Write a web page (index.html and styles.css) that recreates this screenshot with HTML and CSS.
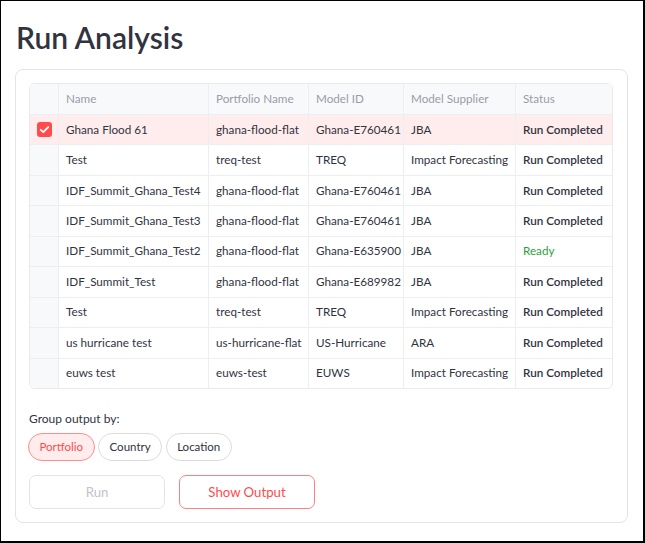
FILE: index.html
```html
<!DOCTYPE html>
<html>
<head>
<meta charset="utf-8">
<link rel="stylesheet" href="styles.css">
</head>
<body>
<div class="frame">
  <h1 class="title">Run Analysis</h1>
  <div class="card">
    <div class="grid">
      <div class="row head">
        <div class="cell sel"></div>
        <div class="cell">Name</div>
        <div class="cell">Portfolio Name</div>
        <div class="cell">Model ID</div>
        <div class="cell">Model Supplier</div>
        <div class="cell">Status</div>
      </div>
      <div class="row selected">
        <div class="cell sel"><span class="check"><svg viewBox="0 0 16 16" width="15" height="15"><path d="M4 8.3l2.7 2.6L12 5.4" fill="none" stroke="#fff" stroke-width="1.9" stroke-linecap="round" stroke-linejoin="round"/></svg></span></div>
        <div class="cell">Ghana Flood 61</div>
        <div class="cell">ghana-flood-flat</div>
        <div class="cell">Ghana-E760461</div>
        <div class="cell">JBA</div>
        <div class="cell status">Run Completed</div>
      </div>
      <div class="row">
        <div class="cell sel"></div>
        <div class="cell">Test</div>
        <div class="cell">treq-test</div>
        <div class="cell">TREQ</div>
        <div class="cell">Impact Forecasting</div>
        <div class="cell status">Run Completed</div>
      </div>
      <div class="row">
        <div class="cell sel"></div>
        <div class="cell">IDF_Summit_Ghana_Test4</div>
        <div class="cell">ghana-flood-flat</div>
        <div class="cell">Ghana-E760461</div>
        <div class="cell">JBA</div>
        <div class="cell status">Run Completed</div>
      </div>
      <div class="row">
        <div class="cell sel"></div>
        <div class="cell">IDF_Summit_Ghana_Test3</div>
        <div class="cell">ghana-flood-flat</div>
        <div class="cell">Ghana-E760461</div>
        <div class="cell">JBA</div>
        <div class="cell status">Run Completed</div>
      </div>
      <div class="row">
        <div class="cell sel"></div>
        <div class="cell">IDF_Summit_Ghana_Test2</div>
        <div class="cell">ghana-flood-flat</div>
        <div class="cell">Ghana-E635900</div>
        <div class="cell">JBA</div>
        <div class="cell ready">Ready</div>
      </div>
      <div class="row">
        <div class="cell sel"></div>
        <div class="cell">IDF_Summit_Test</div>
        <div class="cell">ghana-flood-flat</div>
        <div class="cell">Ghana-E689982</div>
        <div class="cell">JBA</div>
        <div class="cell status">Run Completed</div>
      </div>
      <div class="row">
        <div class="cell sel"></div>
        <div class="cell">Test</div>
        <div class="cell">treq-test</div>
        <div class="cell">TREQ</div>
        <div class="cell">Impact Forecasting</div>
        <div class="cell status">Run Completed</div>
      </div>
      <div class="row">
        <div class="cell sel"></div>
        <div class="cell">us hurricane test</div>
        <div class="cell">us-hurricane-flat</div>
        <div class="cell">US-Hurricane</div>
        <div class="cell">ARA</div>
        <div class="cell status">Run Completed</div>
      </div>
      <div class="row last">
        <div class="cell sel"></div>
        <div class="cell">euws test</div>
        <div class="cell">euws-test</div>
        <div class="cell">EUWS</div>
        <div class="cell">Impact Forecasting</div>
        <div class="cell status">Run Completed</div>
      </div>
    </div>

    <div class="group-label">Group output by:</div>
    <div class="pills">
      <span class="pill active">Portfolio</span>
      <span class="pill">Country</span>
      <span class="pill">Location</span>
    </div>
    <div class="buttons">
      <button class="btn disabled">Run</button>
      <button class="btn primary">Show Output</button>
    </div>
  </div>
</div>
</body>
</html>
```

FILE: styles.css
```css
* { box-sizing: border-box; }
html, body { margin: 0; padding: 0; background: #fff; }
body { font-family: Lato, "Open Sans", sans-serif; color: #31333f; }

.frame {
  width: 645px;
  height: 543px;
  border: 1px solid #000;
  border-right-width: 2px;
  border-bottom-width: 2px;
  padding: 18px 14px 0 14px;
}

.title {
  margin: 0 0 14px 1px;
  font-size: 30px;
  line-height: 36px;
  font-weight: 600;
  color: #31333f;
}

.card {
  width: 613px;
  border: 1px solid #e4e4e6;
  border-radius: 8px;
  padding: 13px 13px 13px 13px;
}

.grid {
  width: 584px;
  border: 1px solid #e8eaee;
  border-radius: 6px;
  overflow: hidden;
  font-size: 11.7px;
}

.row {
  display: grid;
  grid-template-columns: 29px 150px 100px 95px 112px 1fr;
  height: 30.45px;
  border-bottom: 1px solid #eceef2;
}
.row.last { border-bottom: none; height: 29.5px; }
.row.head { height: 31px; background: #f8f9fb; color: #9a9ca8; }

.cell {
  display: flex;
  align-items: center;
  padding: 0 7px 2px 7px;
  border-right: 1px solid #eceef2;
  white-space: nowrap;
  overflow: hidden;
}
.cell:last-child { border-right: none; }
.cell.sel { background: #f8f9fb; padding: 0; justify-content: center; }
.row.selected { background: #ffeded; }
.row.selected .cell.sel { background: #ffeded; }

.check {
  width: 15px;
  height: 15px;
  border-radius: 3px;
  background: #ff4b4b;
  display: flex;
  margin-top: -1px;
}

.status { font-weight: 600; }
.ready { color: #2aa13a; }

.group-label {
  margin-top: 23px;
  font-size: 12px;
  line-height: 14.4px;
}

.pills {
  display: flex;
  gap: 3.5px;
  margin-top: 6.5px;
  margin-left: -1px;
}
.pill {
  height: 28px;
  padding: 0 10.5px;
  border: 1px solid #dcdcdf;
  border-radius: 14px;
  font-size: 11.5px;
  display: flex;
  align-items: center;
  background: #fff;
}
.pill.active {
  background: #ffeded;
  border-color: #ff8d8d;
  color: #ff4b4b;
}

.buttons {
  display: flex;
  gap: 14px;
  margin-top: 14px;
}
.btn {
  width: 136px;
  height: 34px;
  border-radius: 7px;
  background: #fff;
  font-family: Lato, "Open Sans", sans-serif;
  font-size: 13.2px;
  border: 1px solid #e3e3e6;
  padding: 0;
}
.btn.disabled { color: #c2c3ca; }
.btn.primary { border-color: #ff8080; color: #ff4b4b; }
```
